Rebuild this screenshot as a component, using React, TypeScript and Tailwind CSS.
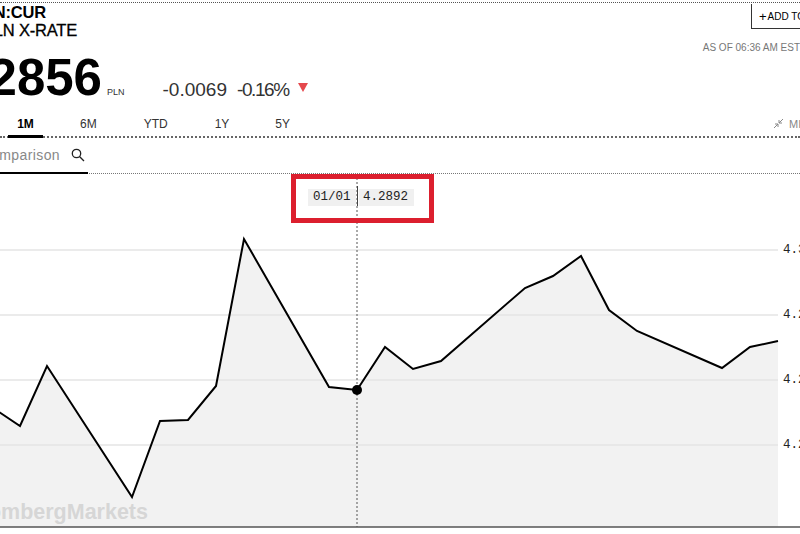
const line = [
  [-10, 405], [20, 425], [47, 365], [132, 496], [160, 420], [188, 419], [216, 385], [244, 238],
  [329, 386], [357, 389], [385, 346], [413, 368], [441, 360], [525, 287], [553, 275], [581, 255],
  [609, 309], [637, 330], [722, 367], [750, 346], [778, 340],
];
const pts = line.map((p) => `${p[0]},${p[1] - 173}`).join(" ");

function ClipLeft({ width, className, children }: { width: string; className: string; children: React.ReactNode }) {
  return <div className={`flex justify-end whitespace-nowrap ${width} ${className}`}>{children}</div>;
}

export default function App() {
  const tabs = [
    { label: "1M", cls: "w-[35px] font-bold border-b-[3px] border-black h-[30px]" },
    { label: "6M", cls: "ml-[37px] text-[#333]" },
    { label: "YTD", cls: "ml-[47px] text-[#333]" },
    { label: "1Y", cls: "ml-[47px] text-[#333]" },
    { label: "5Y", cls: "ml-[46px] text-[#333]" },
  ];

  return (
    <div className="relative w-[800px] h-[534px] overflow-hidden bg-white text-black font-['Liberation_Sans',Arial,sans-serif]">
      <div className="h-[3px] mt-[2px] border-t border-dotted border-[#555]" />
      <div className="flex justify-between h-[42px]">
        <div className="-mt-[2px] text-[16.5px] leading-[18px] font-bold tracking-[-0.2px]">
          <ClipLeft width="w-[46px]" className="">USDPLN:CUR</ClipLeft>
          <ClipLeft width="w-[77px]" className="font-normal [-webkit-text-stroke:0.3px_black]">USD-PLN X-RATE</ClipLeft>
        </div>
        <div className="w-[49px] h-[25px] -mt-[1px] border-l border-b border-[#333] flex items-center pl-[7px] text-[10px] whitespace-nowrap">
          <span className="text-[13px] leading-none mr-[1px]">+</span>ADD TO
        </div>
      </div>
      <div className="h-[12px] -mt-[5px] mb-[2px] flex justify-end text-[10px] leading-[12px] text-[#777] whitespace-nowrap">
        AS OF 06:36 AM EST
      </div>
      <div className="flex items-end h-[46px] mt-[5px]">
        <ClipLeft width="w-[102px]" className="text-[51px] leading-[50px] font-bold mb-[2px]">4.2856</ClipLeft>
        <span className="ml-[5px] mb-[8px] text-[9px] leading-[10px] text-[#333]">PLN</span>
        <span className="ml-[38px] mb-[5px] text-[19px] leading-[20px] text-[#333]">-0.0069</span>
        <span className="ml-[10px] mb-[5px] text-[19px] leading-[20px] tracking-[-1.4px] text-[#333]">-0.16%</span>
        <svg width="11" height="10" viewBox="0 0 11 10" className="ml-[9px] mb-[12px]">
          <path d="M0 0H10L5 9Z" fill="#e5484d" />
        </svg>
      </div>
      <div className="relative flex h-[30px] mt-[3px] border-b-2 border-dotted border-[#666] pl-[8px]">
        {tabs.map((t) => (
          <div key={t.label} className={`flex justify-center pt-[9px] text-[12px] leading-[14px] ${t.cls}`}>
            {t.label}
          </div>
        ))}
        <div className="ml-auto flex items-start gap-[5px] pt-[9px] text-[11px] leading-[14px] text-[#888] whitespace-nowrap w-[27px]">
          <svg width="11" height="11" viewBox="0 0 11 11" fill="none" stroke="#888" strokeWidth="1" className="mt-[1px] shrink-0">
            <path d="M1 10 5 6M2 6H5V9M10 1 6 5M6 2V5H9" />
          </svg>
          MI
        </div>
      </div>
      <div className="flex h-[36px] border-b border-dotted border-[#777]">
        <div className="flex w-[88px] border-b-2 border-black h-[36px] items-center">
          <ClipLeft width="w-[60px]" className="text-[14px] text-[#888] tracking-[0.4px]">Add comparison</ClipLeft>
          <svg width="14" height="14" viewBox="0 0 14 14" fill="none" stroke="#222" strokeWidth="1.3" className="ml-[11px]">
            <circle cx="5.5" cy="5.5" r="4.2" />
            <path d="M8.7 8.7 13 13" />
          </svg>
        </div>
      </div>
      <div className="relative h-[361px]">
        <svg width="800" height="361" viewBox="0 0 800 361" className="block">
          <polygon points={`${pts} 778,353 -10,353`} fill="#f2f2f2" />
          {[76, 141, 206, 271].map((y) => (
            <line key={y} x1="0" x2="778" y1={y} y2={y} stroke="#e4e4e4" strokeWidth="1.5" />
          ))}
          <polyline points={pts} fill="none" stroke="#000" strokeWidth="2" strokeLinejoin="miter" />
          <line x1="357" x2="357" y1="0" y2="353" stroke="#555" strokeWidth="1" strokeDasharray="2 2" />
          <circle cx="357" cy="216" r="5" fill="#000" />
          <line x1="0" x2="800" y1="353" y2="353" stroke="#555" strokeWidth="1.5" />
        </svg>

        {/* highlighted readout over the chart */}
        <div className="absolute left-[291px] top-0 w-[143px] h-[49px] border-[5px] border-[#dc1f2e] flex items-start pl-[12px] pt-[10px] font-['Liberation_Mono',monospace] text-[12.5px] leading-[17px] text-[#222]">
          <span className="bg-[#f0f0f0] w-[48px] pl-[5px]">01/01</span>
          <span className="w-px h-[20px] -mt-[3px] mx-[1px] bg-[#444]" />
          <span className="bg-[#f0f0f0] w-[55px] pl-[4px]">4.2892</span>
        </div>

        {[76, 141, 206, 271].map((y, i) => (
          <span
            key={y}
            className="absolute left-[783px] font-['Liberation_Mono',monospace] text-[12.5px] leading-[14px] text-[#222]"
            style={{ top: y - 7 }}
          >
            {i === 0 ? "4.3" : "4.2"}
          </span>
        ))}

        <div className="absolute left-0 top-[326px] w-[148px] flex justify-end whitespace-nowrap text-[21.5px] leading-[24px] font-bold text-[#d6d6d6]">
          BloombergMarkets
        </div>
      </div>
    </div>
  );
}
